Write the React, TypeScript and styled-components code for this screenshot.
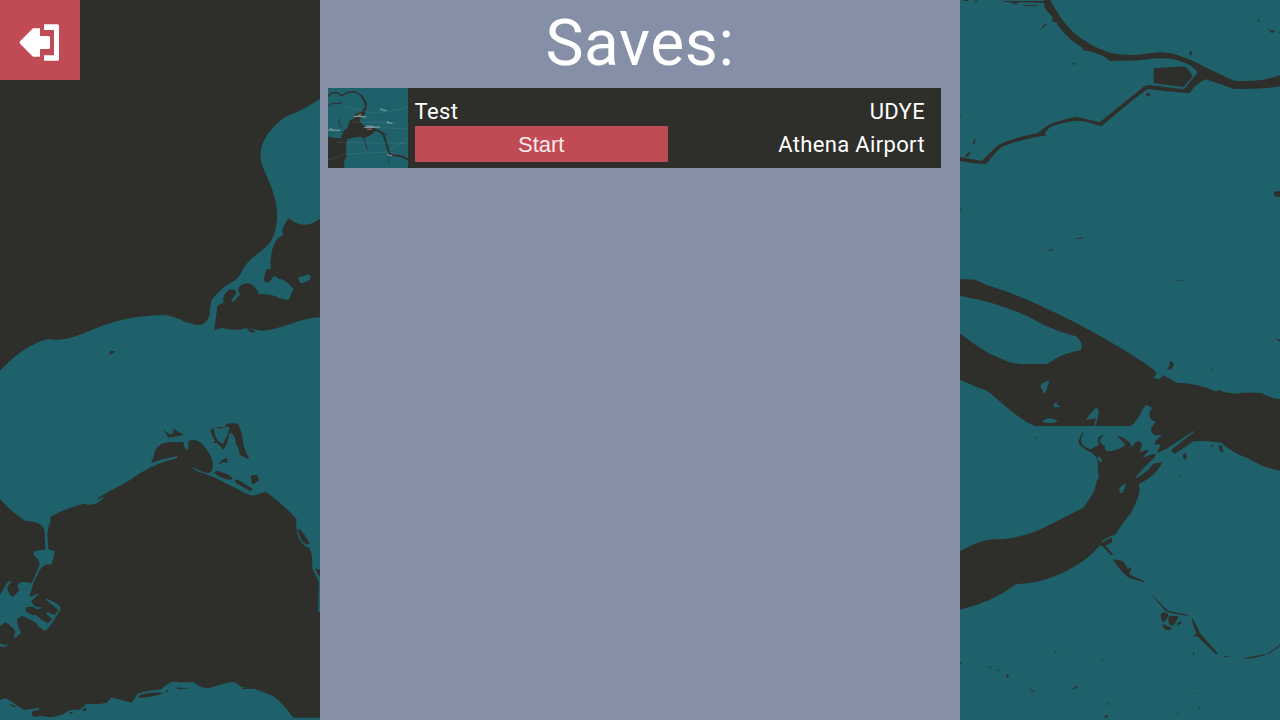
import React from 'react';
import styled, { createGlobalStyle } from 'styled-components';

const land = '#2e2e2a';
const water = '#1f616b';
const red = '#c14b54';

const GlobalStyle = createGlobalStyle`
  body { margin: 0; overflow: hidden; }
`;

const Page = styled.main`
  display: grid;
  grid-template-columns: 1fr 640px 1fr;
  height: 100vh;
  font-family: Roboto, 'Liberation Sans', sans-serif;
  color: #fff;
`;

const MapSide = styled.div<{ $ground: string }>`
  position: relative;
  overflow: hidden;
  background: ${(p) => p.$ground};
  svg { display: block; }
`;

const ExitButton = styled.button`
  position: absolute;
  top: 0;
  left: 0;
  width: 80px;
  height: 80px;
  padding: 0;
  border: 0;
  background: ${red};
`;

const Panel = styled.section`
  display: flex;
  flex-direction: column;
  background: #858fa6;
`;

const Title = styled.h1`
  margin: 0;
  height: 88px;
  line-height: 88px;
  text-align: center;
  font-size: 64px;
  font-weight: 400;
  letter-spacing: 0.6px;
`;

const SaveRow = styled.article`
  display: flex;
  width: 613px;
  height: 80px;
  margin-left: 8px;
  background: ${land};
`;

const Thumbnail = styled.svg`
  flex: none;
  width: 80px;
  height: 80px;
  background: ${water};
`;

const Details = styled.div`
  flex: none;
  display: flex;
  flex-direction: column;
  width: 253.5px;
  margin-left: 6.5px;
  padding-top: 7px;
`;

const Airport = styled(Details)`
  flex: 1;
  margin: 0 16px 0 0;
  text-align: right;
`;

const Label = styled.span`
  height: 31px;
  line-height: 33px;
  font-size: 22px;
  letter-spacing: 0.35px;
  & + & { height: 36px; line-height: 37px; }
`;

const StartButton = styled.button`
  height: 36px;
  padding: 2px 0 0;
  border: 0;
  background: ${red};
  color: #f7e8e9;
  font: 22px/34px 'Liberation Sans', Arial, sans-serif;
`;

const WestMap = () => (
  <svg width="320" height="720" viewBox="0 0 960 2160">
    <g fill={water}>
      <path d="M960 296C920 323 890 338 862 348Q840 358 808 395C785 428 778 455 783 482C793 525 835 580 831 658Q829 690 815 720C795 753 755 765 730 805Q718 838 695 847Q660 867 633 902L632 920Q628 923 630 938C626 965 609 977 588 975C550 967 530 948 490 945C420 947 370 955 320 973C270 990 215 1020 170 1020Q145 1014 125 1022C70 1045 35 1075 0 1112V1497Q35 1537 75 1562C105 1564 131 1570 134 1594L136 1648L104 1654Q98 1660 103 1667Q118 1677 119 1694L95 1750Q69 1743 57 1749Q50 1757 58 1771L38 1792Q18 1774 23 1759L35 1744Q23 1741 15 1759L0 1785V1879L16 1866Q41 1883 46 1895L41 1913L48 1913L63 1898Q50 1875 51 1858L66 1847Q90 1857 110 1870L114 1879L134 1893Q148 1887 180 1830Q184 1823 174 1813L142 1796L138 1799L173 1828Q174 1836 164 1845L144 1837L137 1840L157 1857L144 1870Q124 1860 107 1844L98 1846Q90 1841 82 1838Q72 1827 81 1820L98 1820L112 1829L128 1822L118 1822Q100 1820 97 1808L94 1803L119 1780L88 1791L100 1750L119 1710Q135 1688 154 1694Q160 1679 165 1654L145 1648L142 1602Q144 1578 151 1568V1550Q200 1524 250 1511Q285 1523 314 1491Q303 1492 295 1499L293 1494L390 1440Q452 1393 532 1374V1368Q480 1379 453 1389C469 1360 457 1338 501 1327L550 1326Q552 1348 565 1350V1323Q582 1315 601 1327C622 1350 650 1380 634 1415C620 1426 593 1408 575 1400L588 1412L640 1431L740 1481L760 1487L797 1475Q845 1508 890 1557Q885 1586 897 1615Q910 1640 924 1642C940 1656 935 1680 938 1707L957 1747L954 1835H960V952C910 951 830 994 782 992L740 983Q705 996 667 983L643 991L652 918Q662 909 671 909Q666 888 680 875Q695 862 708 873C711 883 700 892 693 900L699 906L720 884Q710 870 720 858Q735 846 751 851Q771 862 775 882Q820 882 836 894L865 901L881 867Q855 835 835 836Q821 820 815 836Q808 851 796 846Q788 840 794 828Q795 810 804 806L814 807Q808 795 814 767Q816 738 832 716L850 704Q844 690 851 680Q858 662 867 655C885 670 901 676 920 674Q940 671 960 656Z" />
      <path d="M895 835Q893 828 904 830L924 823Q936 825 930 839L908 850Q897 850 895 835Z" />
      <path d="M0 2100L17 2094L73 2130L118 2123L116 2130L98 2133Q91 2150 107 2150L129 2147Q149 2158 192 2141Q210 2126 231 2130Q245 2129 258 2112Q315 2112 320 2108L334 2092L395 2108Q401 2098 413 2081Q440 2072 484 2068Q503 2050 517 2045Q560 2049 580 2045Q606 2067 627 2064C661 2056 692 2039 710 2050L724 2061L758 2065Q803 2081 819 2088Q847 2108 880 2153H960V2160H0Z" />
      <path d="M0 1930Q18 1939 28 1932Q20 1943 0 1939Z" />
    </g>
    <g fill={land}>
      <path d="M328 1058L333 1053L346 1053L336 1062L328 1063ZM491 1289L510 1304L521 1298L519 1286L552 1305L505 1313ZM630 1291L641 1283Q642 1317 668 1333L684 1303L689 1280L650 1286V1281L683 1281L675 1277Q681 1267 714 1271L726 1303Q730 1350 747 1374L742 1377L718 1363Q719 1346 707 1331Q708 1306 690 1297L681 1330L671 1349L651 1329H638L645 1324Q635 1305 630 1291ZM656 1394Q663 1378 682 1373V1389L668 1387ZM642 1417L652 1412Q690 1423 699 1436L690 1440Q656 1434 642 1417ZM752 1429Q764 1420 774 1428L777 1442L756 1454ZM703 1439L715 1440L758 1466L752 1474L709 1450ZM891 1590L899 1587Q919 1609 929 1629Q924 1640 906 1622ZM945 1705L960 1710V1730Q948 1718 945 1705ZM740 984L751 987L765 992L762 999L746 994Z" />
      <path d="M414 2090Q432 2076 488 2078Q485 2086 421 2094ZM495 2072L507 2070L502 2077ZM531 2062L544 2063L568 2066L531 2067ZM248 2129L258 2122L260 2130L250 2134ZM207 2136L221 2137L212 2142ZM27 2112L41 2115L50 2123Q34 2121 27 2112ZM727 2063L758 2062V2067L727 2067Z" />
    </g>
    <path d="M770 868L775 883M652 983Q660 970 667 985" fill="none" stroke={land} strokeWidth="2" />
  </svg>
);

const EastMap = () => (
  <svg width="320" height="720" viewBox="0 0 960 2160">
    <g fill={land}>
      <path d="M130 3H250L254 0H271Q299 57 340 97Q390 140 453 159Q510 170 570 160Q615 151 655 166L700 183Q775 222 823 242Q907 247 960 225V259Q905 269 820 266L738 238Q720 245 705 259L688 279C655 278 610 272 565 267Q544 277 425 378L412 376Q375 361 348 362Q300 369 277 379Q260 388 254 399L260 406Q185 417 127 440Q105 455 84 487L76 492Q40 492 0 483V471L65 483L108 441Q137 418 232 400L265 375Q292 362 350 350L419 367L553 259L565 255L672 268L712 219Q710 210 690 196C645 170 590 173 556 179Q500 184 463 182L450 183L438 173Q420 162 386 153L370 151L365 141Q330 123 297 80L289 66L277 65L278 51Q262 35 254 23L252 9L180 6L166 13L150 7L130 5Z" />
      <path d="M581 205L673 199Q692 211 697 230L670 261L581 250Z" />
      <path d="M240 90L251 75L264 70L252 81ZM190 15H231V18H194ZM338 189L344 188L346 194H341ZM557 281L568 278L571 286L563 290ZM687 160L692 151L696 160L691 169ZM891 60L900 61L897 66ZM920 81L933 92L944 90L943 97L933 98ZM41 421L47 417L44 431L39 434ZM13 470Q22 458 32 455Q28 468 18 471ZM942 575L960 573V591L943 589ZM0 341L3 346L0 349ZM0 626L9 629L0 631ZM345 718L360 713L372 713L365 716ZM10 0H25V3H12ZM44 2H53V5H44ZM956 94L960 97L957 99Z" />
      <path d="M0 837L45 839L62 846L81 856Q185 885 350 970Q500 1050 584 1111L590 1121L586 1127L578 1131Q600 1145 609 1125L650 1148Q720 1150 765 1174L783 1170L790 1176L826 1181Q865 1174 900 1180L904 1178L910 1183Q933 1194 960 1198V1412Q917 1406 860 1373Q820 1360 784 1328Q740 1321 700 1324Q672 1344 645 1361L635 1356L637 1347L701 1297V1292L623 1345Q600 1357 590 1358L603 1333L583 1334Q586 1318 605 1308L600 1305Q573 1310 573 1285L588 1264Q567 1264 568 1240Q570 1228 579 1225L558 1214C546 1228 536 1261 512 1278H224Q190 1264 140 1222Q100 1187 82 1173Q40 1158 0 1139V1000Q37 1031 90 1062C130 1076 140 1090 185 1092H262Q310 1058 362 1051Q373 1031 348 1009Q295 996 240 969C147 917 72 902 0 887Z" />
      <path d="M367 1298L371 1299Q366 1309 363 1316Q363 1333 375 1340L393 1349Q399 1341 409 1339Q420 1337 414 1322Q415 1304 433 1306Q420 1312 420 1323Q421 1332 434 1337Q434 1348 439 1353Q459 1355 484 1343L497 1335Q482 1319 470 1306Q493 1312 513 1332L511 1341L521 1335Q524 1324 537 1324Q547 1328 545 1339L539 1357L559 1350Q570 1350 561 1358L547 1373L582 1361Q592 1361 582 1374Q550 1403 527 1431L531 1434L566 1409L579 1391L607 1386Q595 1416 558 1440L536 1453L540 1469Q533 1502 511 1542Q489 1565 466 1605L451 1608L425 1624L427 1628L454 1612L458 1625L437 1637L460 1664L452 1665L426 1637H418Q390 1675 320 1713Q243 1751 168 1753Q94 1809 0 1829V1654Q64 1616 110 1618C218 1614 273 1569 369 1524Q387 1501 403 1473L411 1440L417 1434L413 1412Q417 1400 410 1375Q400 1359 385 1353Q356 1339 355 1324Z" />
      <path d="M458 1678L486 1682Q502 1696 503 1709L510 1700L514 1707L507 1721L518 1728L556 1745L550 1747L504 1732Q480 1712 458 1678Z" />
      <path d="M695 1853Q705 1864 719 1898L774 1961L768 1963Q740 1937 712 1909L701 1910L709 1899Q697 1873 695 1853Z" />
      <path d="M603 1841Q612 1833 625 1842Q624 1855 612 1867Q600 1861 603 1841ZM627 1847L655 1849Q650 1867 638 1878Q620 1874 627 1847ZM608 1871L636 1885Q624 1897 610 1883ZM650 1872L664 1862V1870L655 1876ZM572 1783L582 1791L624 1832L683 1844L684 1848L622 1837L615 1831ZM788 1967L815 1971L794 1972ZM851 1974L913 1963L917 1965Q886 1975 851 1976ZM920 1962L960 1934V1938L924 1963Z" />
      <path d="M622 1104L629 1098L628 1085L636 1084L642 1096L632 1109L622 1108ZM669 1363L677 1360L681 1370L674 1380L669 1373ZM776 1338L784 1335L790 1352L789 1358L780 1352ZM749 1336H762L756 1341ZM263 751L284 746L278 750L264 753ZM650 841H671V842H650ZM947 1014L960 1020V1027L952 1019ZM757 1103L759 1108L757 1116ZM224 1313L230 1311L229 1316ZM656 1426L661 1423L662 1428Z" />
      <path d="M283 1954H292L287 1958ZM423 1981H434L428 1983ZM699 1957H702V1966H699ZM78 1997L95 2002L92 2003ZM110 2008L121 2011L116 2013ZM138 2027L142 2022L147 2029L142 2034ZM201 2058L225 2077L218 2075ZM333 2069L348 2058L354 2059L347 2065ZM435 2113L450 2108L440 2114ZM432 2149L440 2145L445 2151L438 2155ZM711 2077L716 2081L712 2083ZM715 2120H719V2127H716ZM651 2136L654 2140L651 2144ZM0 1987L6 1993H0Z" />
    </g>
    <g fill={water}>
      <path d="M241 1158Q250 1143 268 1142L256 1180H252ZM278 1218L289 1205L291 1213L301 1222H284ZM246 1266Q265 1245 294 1264Q280 1273 246 1266ZM378 1260Q397 1231 411 1222Q419 1236 414 1249L406 1280L403 1276L408 1255ZM411 1371Q425 1367 426 1385Q415 1386 411 1371ZM477 1470Q483 1454 498 1452Q496 1465 487 1479H480Z" />
    </g>
  </svg>
);

const ExitIcon = () => (
  <svg width="80" height="80" viewBox="0 0 80 80" fill="#fff" aria-hidden="true">
    <path d="M33 28.3H40V36H48.5Q50 36 50 37.5V47.5Q50 49 48.5 49H40V56.7H33L20.3 44Q18.8 42.5 20.3 41ZM44 24.3H57.5Q59 24.3 59 25.8V59.2Q59 60.7 57.5 60.7H44V55.3H54V30H44Z" />
  </svg>
);

const MapThumbnail = () => (
  <Thumbnail viewBox="0 0 240 240" aria-hidden="true">
    <defs>
      <filter id="terrain-soft"><feGaussianBlur stdDeviation="1.3" /></filter>
    </defs>
    <g filter="url(#terrain-soft)">
      <path d="M-5 144Q20 152 38 151L47 128L59 119L63 100L84 87L81 77L99 72L111 58L109 43L96 25L114 38L117 50L111 77L100 86L94 98L111 116L143 121L133 139L111 149L90 146L58 154L54 170L55 205L49 217V245H-5Z" fill={land} />
      <g fill="none" stroke={land}>
        <path d="M0 26L10 15L28 14L41 23L58 14L77 11Q96 16 108 32" strokeWidth="4" />
        <path d="M0 54L12 47L37 46L43 39M35 93Q29 105 42 119M106 147L112 165L118 184M166 134L178 143" strokeWidth="3" />
        <path d="M136 126Q156 126 166 140L174 162L181 187L187 200L218 204L240 214" strokeWidth="6" />
        <path d="M182 197V231" strokeWidth="2" opacity=".6" />
      </g>
      <g fill="none" stroke="#73999b" opacity=".3">
        <path d="M28 163L240 166M0 214Q25 213 42 199L182 192L220 202M45 55L130 75L210 66L240 55M130 117L240 123M186 185L240 153M72 102L206 105" strokeWidth="2" />
      </g>
      <g stroke="#c2cdcb" opacity=".65" strokeWidth="3">
        <path d="M78 85L115 87M108 119L155 117M0 126L37 127M158 64L176 68M177 104L194 106M177 200L193 203" />
        <path d="M88 81L102 85M114 114L135 115M6 120L16 126M157 61L162 67M177 99L181 104" />
      </g>
      <path d="M117 124L132 123M94 78L100 79" stroke="#b0786a" strokeWidth="4" opacity=".7" />
    </g>
  </Thumbnail>
);

export default function App() {
  return (
    <>
      <GlobalStyle />
      <Page>
        <MapSide $ground={land}>
          <WestMap />
          <ExitButton aria-label="Exit"><ExitIcon /></ExitButton>
        </MapSide>
        <Panel>
          <Title>Saves:</Title>
          <SaveRow>
            <MapThumbnail />
            <Details>
              <Label>Test</Label>
              <StartButton>Start</StartButton>
            </Details>
            <Airport>
              <Label>UDYE</Label>
              <Label>Athena Airport</Label>
            </Airport>
          </SaveRow>
        </Panel>
        <MapSide $ground={water}>
          <EastMap />
        </MapSide>
      </Page>
    </>
  );
}
